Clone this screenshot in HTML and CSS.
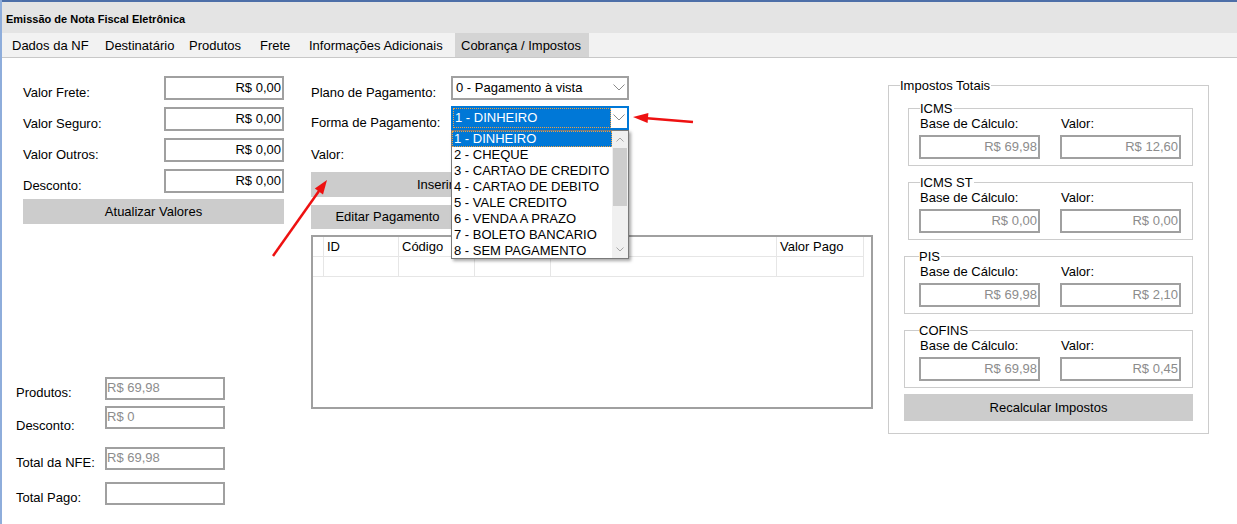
FILE: index.html
```html
<!DOCTYPE html>
<html lang="pt-BR">
<head>
<meta charset="utf-8">
<title>Emissão de Nota Fiscal Eletrônica</title>
<link rel="stylesheet" href="styles.css">
</head>
<body>
<div class="window">
  <div class="titlebar">Emissão de Nota Fiscal Eletrônica</div>
  <div class="tabs">
    <div class="tab">Dados da NF</div>
    <div class="tab">Destinatário</div>
    <div class="tab">Produtos</div>
    <div class="tab">Frete</div>
    <div class="tab">Informações Adicionais</div>
    <div class="tab active">Cobrança / Impostos</div>
  </div>
  <div class="content">
    <div class="col-left">
      <div class="form-top">
        <div class="frow"><span class="lbl">Valor Frete:</span><div class="field dark">R$ 0,00</div></div>
        <div class="frow"><span class="lbl">Valor Seguro:</span><div class="field dark">R$ 0,00</div></div>
        <div class="frow"><span class="lbl">Valor Outros:</span><div class="field dark">R$ 0,00</div></div>
        <div class="frow"><span class="lbl">Desconto:</span><div class="field dark">R$ 0,00</div></div>
        <div class="btn btn-update">Atualizar Valores</div>
      </div>
      <div class="form-bottom">
        <div class="brow b1"><span class="lbl">Produtos:</span><div class="field gray">R$ 69,98</div></div>
        <div class="brow b2"><span class="lbl low">Desconto:</span><div class="field gray">R$ 0</div></div>
        <div class="brow b3"><span class="lbl">Total da NFE:</span><div class="field gray">R$ 69,98</div></div>
        <div class="brow b4"><span class="lbl">Total Pago:</span><div class="field gray"></div></div>
      </div>
    </div>

    <div class="col-mid">
      <div class="mrow r1">
        <span class="lbl">Plano de Pagamento:</span>
        <div class="select">
          <span class="sel-text">0 - Pagamento à vista</span>
          <span class="chev"><svg width="12" height="7" viewBox="0 0 12 7"><polyline points="0.5,0.5 6,6 11.5,0.5" fill="none" stroke="#8a8a8a" stroke-width="1"/></svg></span>
        </div>
      </div>
      <div class="mrow r2">
        <span class="lbl">Forma de Pagamento:</span>
        <div class="select focused">
          <span class="sel-text selected">1 - DINHEIRO</span>
          <span class="chev"><svg width="12" height="7" viewBox="0 0 12 7"><polyline points="0.5,0.5 6,6 11.5,0.5" fill="none" stroke="#8a8a8a" stroke-width="1"/></svg></span>
          <div class="dd">
            <div class="dd-items">
              <div class="dd-item hl">1 - DINHEIRO</div>
              <div class="dd-item">2 - CHEQUE</div>
              <div class="dd-item">3 - CARTAO DE CREDITO</div>
              <div class="dd-item">4 - CARTAO DE DEBITO</div>
              <div class="dd-item">5 - VALE CREDITO</div>
              <div class="dd-item">6 - VENDA A PRAZO</div>
              <div class="dd-item">7 - BOLETO BANCARIO</div>
              <div class="dd-item">8 - SEM PAGAMENTO</div>
            </div>
            <div class="sb">
              <div class="sb-btn"><svg width="8" height="5" viewBox="0 0 8 5"><polyline points="0.5,4.5 4,1 7.5,4.5" fill="none" stroke="#a6a6a6" stroke-width="1"/></svg></div>
              <div class="sb-thumb"></div>
              <div class="sb-track"></div>
              <div class="sb-btn"><svg width="8" height="5" viewBox="0 0 8 5"><polyline points="0.5,0.5 4,4 7.5,0.5" fill="none" stroke="#a6a6a6" stroke-width="1"/></svg></div>
            </div>
          </div>
        </div>
      </div>
      <div class="mrow r3">
        <span class="lbl">Valor:</span>
        <div class="field valor"></div>
      </div>
      <div class="btn btn-insert">Inserir Pagamento</div>
      <div class="btn btn-edit">Editar Pagamento</div>
      <div class="grid">
        <div class="cells">
          <div class="c"></div><div class="c">ID</div><div class="c">Código</div><div class="c"></div><div class="c"></div><div class="c">Valor Pago</div>
          <div class="c"></div><div class="c"></div><div class="c"></div><div class="c"></div><div class="c"></div><div class="c"></div>
        </div>
      </div>
    </div>

    <div class="group outer">
      <div class="legend">Impostos Totais</div>
      <div class="group sub narrow">
        <div class="legend">ICMS</div>
        <div class="pair"><span>Base de Cálculo:</span><span>Valor:</span></div>
        <div class="pair inputs"><div class="field tax">R$ 69,98</div><div class="field tax">R$ 12,60</div></div>
      </div>
      <div class="group sub narrow">
        <div class="legend">ICMS ST</div>
        <div class="pair"><span>Base de Cálculo:</span><span>Valor:</span></div>
        <div class="pair inputs"><div class="field tax">R$ 0,00</div><div class="field tax">R$ 0,00</div></div>
      </div>
      <div class="group sub wide">
        <div class="legend">PIS</div>
        <div class="pair"><span>Base de Cálculo:</span><span>Valor:</span></div>
        <div class="pair inputs"><div class="field tax">R$ 69,98</div><div class="field tax">R$ 2,10</div></div>
      </div>
      <div class="group sub wide">
        <div class="legend">COFINS</div>
        <div class="pair"><span>Base de Cálculo:</span><span>Valor:</span></div>
        <div class="pair inputs"><div class="field tax">R$ 69,98</div><div class="field tax">R$ 0,45</div></div>
      </div>
      <div class="btn btn-recalc">Recalcular Impostos</div>
    </div>
  </div>

  <svg class="arrows" width="1237" height="524" viewBox="0 0 1237 524">
    <line x1="273" y1="256" x2="319" y2="191" stroke="#ee1111" stroke-width="2.5"/>
    <polygon points="327,180 323,194.5 314.8,188.5" fill="#ee1111"/>
    <line x1="693" y1="122" x2="647" y2="118.2" stroke="#ee1111" stroke-width="2.5"/>
    <polygon points="633,117 648.4,113 647.6,123" fill="#ee1111"/>
  </svg>
</div>
</body>
</html>
```

FILE: styles.css
```css
* { box-sizing: border-box; }
html, body { margin: 0; padding: 0; background: #fff; }
body {
  font-family: "Liberation Sans", Arial, sans-serif;
  font-size: 13px;
  color: #000;
  width: 1237px;
  height: 524px;
  overflow: hidden;
}
.window {
  position: relative;
  height: 524px;
  border-left: 2px solid #8eaddb;
}
.titlebar {
  height: 33px;
  border-top: 2px solid #4d6fa8;
  background: #e4e4e4;
  padding: 3px 0 0 4px;
  line-height: 28px;
  font-size: 11px;
  font-weight: bold;
}
.tabs {
  height: 25px;
  background: #f2f2f2;
  border-bottom: 1px solid #c8c8c8;
  display: grid;
  grid-template-columns: 93px 84px 71px 49px 152px 134px;
  padding-left: 4px;
}
.tab {
  line-height: 23px;
  padding: 1px 0 0 6px;
  white-space: nowrap;
}
.tab.active { background: #d4d4d4; }

.content {
  display: flex;
  align-items: flex-start;
}
.lbl { line-height: 15px; white-space: nowrap; }
.field {
  border: 2px solid #a0a0a0;
  background: #fff;
  width: 120px;
  height: 24px;
  white-space: nowrap;
  overflow: hidden;
}
.field.dark { text-align: right; line-height: 19px; padding-right: 1px; }
.field.gray { height: 23px; color: #8c8c8c; line-height: 18px; }
.btn { background: #cccccc; text-align: center; white-space: nowrap; }

/* left column */
.col-left { width: 268px; margin-left: 14px; }
.form-top { padding: 18px 0 0 7px; }
.frow { display: flex; align-items: flex-end; height: 24px; margin-bottom: 7px; }
.frow .lbl { flex: 1; }
.btn-update { height: 25px; line-height: 25px; margin-top: -1px; }
.form-bottom { margin-top: 153px; }
.brow { display: flex; align-items: flex-end; height: 23px; }
.brow .lbl { width: 89px; }
.brow .lbl.low { margin-bottom: -4px; }
.b2 { margin-top: 6px; }
.b3 { margin-top: 18px; }
.b4 { margin-top: 12px; }

/* middle column */
.col-mid { width: 562px; margin-left: 27px; padding-top: 18px; }
.mrow { display: flex; align-items: flex-end; height: 24px; }
.mrow .lbl { width: 140px; }
.r2 { margin-top: 6px; position: relative; z-index: 2; }
.r3 { margin-top: 9px; height: 23px; }
.field.valor { width: 178px; height: 23px; }
.select {
  position: relative;
  width: 178px;
  height: 24px;
  border: 2px solid #a0a0a0;
  background: #fff;
  display: flex;
}
.sel-text { flex: 1; padding-left: 3px; line-height: 19px; white-space: nowrap; }
.chev { width: 16px; display: flex; align-items: center; justify-content: center; padding-bottom: 2px; }
.select.focused { border-color: #0078d7; }
.sel-text.selected {
  background: #0078d7;
  color: #fff;
  padding-left: 2px;
  line-height: 20px;
  outline: 1px dotted #f0a040;
  outline-offset: -1px;
}
.dd {
  position: absolute;
  left: -2px;
  top: 22px;
  width: 178px;
  height: 129px;
  border: 1px solid #7a7a7a;
  background: #fff;
  box-shadow: 2px 2px 3px rgba(0, 0, 0, 0.35);
  display: flex;
}
.dd-items { flex: 1; }
.dd-item { height: 16px; line-height: 16px; padding-left: 2px; white-space: nowrap; }
.dd-item.hl {
  background: #0078d7;
  color: #fff;
  outline: 1px dotted #f0a040;
  outline-offset: -1px;
}
.sb { width: 16px; background: #f0f0f0; display: flex; flex-direction: column; }
.sb-btn { height: 17px; display: flex; align-items: center; justify-content: center; }
.sb-thumb { height: 58px; background: #cdcdcd; margin: 0 1px; }
.sb-track { flex: 1; }
.btn-insert { width: 318px; height: 25px; line-height: 25px; margin-top: 10px; }
.btn-edit { width: 153px; height: 24px; line-height: 24px; margin-top: 8px; }
.grid {
  margin-top: 6px;
  width: 562px;
  height: 174px;
  border: 2px solid #a0a0a0;
  background: #fff;
}
.cells {
  display: grid;
  grid-template-columns: 11px 75px 76px 76px 226px 87px;
  grid-auto-rows: 20px;
  width: 551px;
}
.c {
  border-right: 1px solid #e6e6e6;
  border-bottom: 1px solid #e6e6e6;
  line-height: 19px;
  padding-left: 3px;
  white-space: nowrap;
}

/* right group */
.group { border: 1px solid #cccccc; }
.legend {
  display: table;
  margin-top: -8px;
  margin-left: 11px;
  background: #fff;
  line-height: 15px;
  padding-right: 1px;
}
.outer {
  width: 321px;
  height: 349px;
  margin-left: 15px;
  margin-top: 27px;
}
.sub { height: 58px; margin-top: 16px; padding: 0 0 0 10px; }
.outer > .legend + .sub { margin-top: 15px; }
.sub .legend { margin-left: 1px; }
.sub.narrow { width: 285px; margin-left: 19px; }
.sub.wide { width: 289px; margin-left: 15px; padding-left: 14px; }
.sub.wide .legend { margin-left: 0; }
.pair { display: grid; grid-template-columns: 121px 121px; column-gap: 20px; line-height: 15px; }
.pair span { padding-left: 1px; }
.pair.inputs { margin-top: 4px; }
.field.tax {
  width: 121px;
  color: #8c8c8c;
  text-align: right;
  line-height: 20px;
  padding-right: 1px;
}
.btn-recalc { width: 289px; height: 27px; line-height: 27px; margin: 6px 0 0 15px; }

.arrows { position: absolute; left: -2px; top: 0; pointer-events: none; }
```
